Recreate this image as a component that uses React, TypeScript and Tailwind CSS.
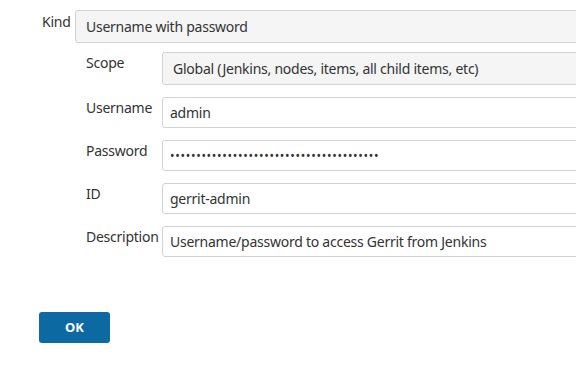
import React from "react";

const font = { fontFamily: '"Noto Sans", "Open Sans", sans-serif' };

function Row({ label, children }: { label: string; children: React.ReactNode }) {
  return (
    <div className="flex items-start">
      <div className="w-[76px] shrink-0 pt-[1px] text-[14px] leading-[20px] tracking-[-0.25px] text-[#333]">{label}</div>
      <div className="flex-1 min-w-0">{children}</div>
    </div>
  );
}

function Box({ gray, children, padLeft = "pl-[7px]" }: { gray?: boolean; children: React.ReactNode; padLeft?: string }) {
  return (
    <div
      className={`${gray ? "h-[33px] bg-[#f5f5f5]" : "h-[31px] bg-white"} -mr-[10px] flex items-center rounded-[3px] border border-[#d3d3d3] ${padLeft} text-[14px] tracking-[-0.25px] text-[#333] whitespace-nowrap overflow-hidden`}
    >
      {children}
    </div>
  );
}

export default function App() {
  const dots = "•".repeat(40);
  return (
    <div className="w-[576px] h-[367px] overflow-hidden bg-white" style={font}>
      <div className="pl-[42px] pt-[10px]">
        <div className="flex items-start">
          <div className="w-[33px] shrink-0 pt-[2px] text-[14px] leading-[20px] tracking-[-0.25px] text-[#333]">Kind</div>
          <div className="flex-1 min-w-0">
            <div className="h-[33px] -mr-[10px] flex items-center rounded-[3px] border border-[#d3d3d3] bg-[#f5f5f5] pl-[10px] text-[14px] tracking-[-0.25px] text-[#333] whitespace-nowrap">
              Username with password
            </div>
          </div>
        </div>
        <div className="pl-[44px] pt-[9px] flex flex-col gap-[12px]">
          <Row label="Scope">
            <Box gray padLeft="pl-[10px]">Global (Jenkins, nodes, items, all child items, etc)</Box>
          </Row>
          <Row label="Username">
            <Box>admin</Box>
          </Row>
          <Row label="Password">
            <Box>
              <span className="text-[12px] tracking-[0.72px]">{dots}</span>
            </Box>
          </Row>
          <Row label="ID">
            <Box>gerrit-admin</Box>
          </Row>
          <Row label="Description">
            <Box>Username/password to access Gerrit from Jenkins</Box>
          </Row>
        </div>
        <div className="pt-[55px] -ml-[3px]">
          <button className="w-[71px] h-[31px] rounded-[3px] bg-[#0d69a2] text-white text-[13px] font-bold">OK</button>
        </div>
      </div>
    </div>
  );
}
